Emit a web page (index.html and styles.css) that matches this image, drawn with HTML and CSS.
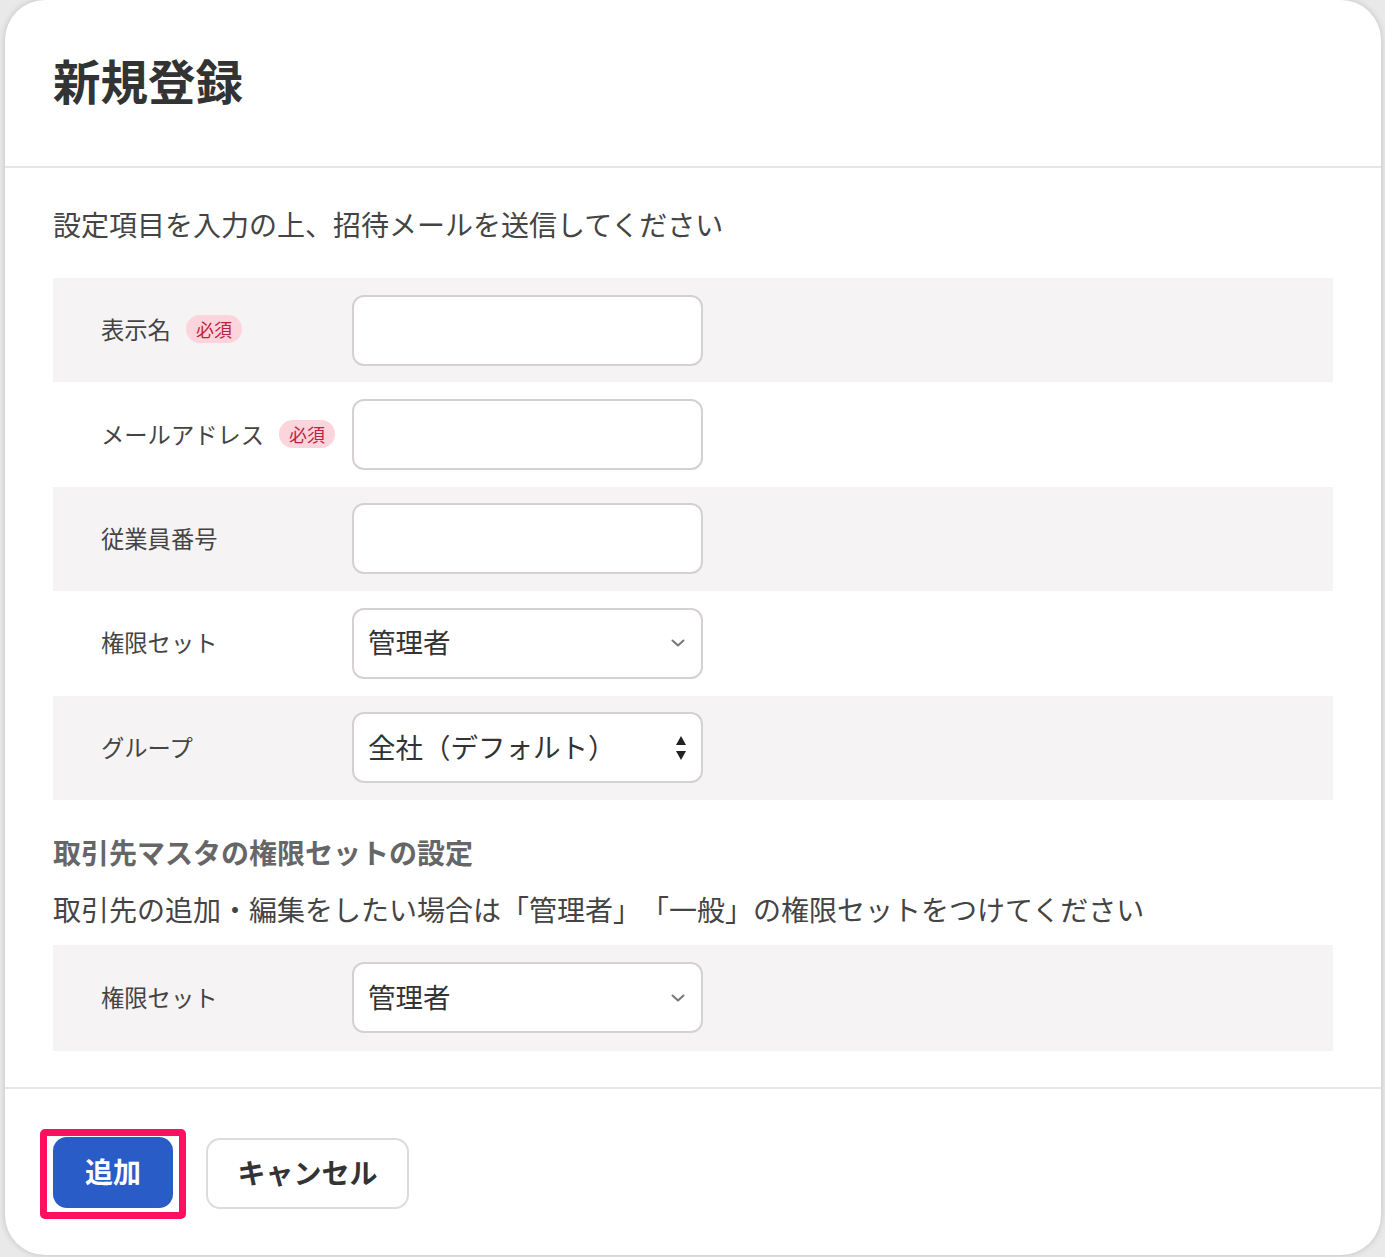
FILE: index.html
```html
<!DOCTYPE html>
<html lang="ja">
<head>
    <meta charset="UTF-8">
    <meta name="viewport" content="width=device-width, initial-scale=1.0">
    <title>新規登録</title>
    <link rel="stylesheet" href="styles.css">
</head>
<body>
    <div class="modal">
        <div class="modal-header">
            <h1>新規登録</h1>
        </div>

        <div class="modal-body">
            <p class="lead">設定項目を入力の上、招待メールを送信してください</p>

            <div class="form-table">
                <div class="form-row">
                    <div class="form-label">表示名<span class="required">必須</span></div>
                    <input type="text" class="text-input">
                </div>
                <div class="form-row">
                    <div class="form-label">メールアドレス<span class="required">必須</span></div>
                    <input type="text" class="text-input">
                </div>
                <div class="form-row">
                    <div class="form-label">従業員番号</div>
                    <input type="text" class="text-input">
                </div>
                <div class="form-row">
                    <div class="form-label">権限セット</div>
                    <div class="select-box">
                        <span>管理者</span>
                        <svg class="chevron" width="14" height="10" viewBox="0 0 14 10"><path d="M1.5 2.5 L7 7.5 L12.5 2.5" fill="none" stroke="#777" stroke-width="2" stroke-linecap="round" stroke-linejoin="round"/></svg>
                    </div>
                </div>
                <div class="form-row">
                    <div class="form-label">グループ</div>
                    <div class="select-box">
                        <span>全社（デフォルト）</span>
                        <svg class="stepper" width="12" height="26" viewBox="0 0 12 26"><path d="M6 1 L11 10 L1 10 Z M6 25 L11 16 L1 16 Z" fill="#222"/></svg>
                    </div>
                </div>
            </div>

            <h2 class="section-title">取引先マスタの権限セットの設定</h2>
            <p class="section-note">取引先の追加・編集をしたい場合は「管理者」「一般」の権限セットをつけてください</p>

            <div class="form-table partner-table">
                <div class="form-row">
                    <div class="form-label">権限セット</div>
                    <div class="select-box">
                        <span>管理者</span>
                        <svg class="chevron" width="14" height="10" viewBox="0 0 14 10"><path d="M1.5 2.5 L7 7.5 L12.5 2.5" fill="none" stroke="#777" stroke-width="2" stroke-linecap="round" stroke-linejoin="round"/></svg>
                    </div>
                </div>
            </div>
        </div>

        <div class="modal-footer">
            <div class="highlight">
                <button class="btn btn-primary">追加</button>
            </div>
            <button class="btn btn-secondary">キャンセル</button>
        </div>
    </div>
</body>
</html>
```

FILE: styles.css
```css
* {
    margin: 0;
    padding: 0;
    box-sizing: border-box;
    font-family: "Noto Sans CJK JP", "Noto Sans", sans-serif;
    text-spacing-trim: space-all;
}

body {
    background: #e9e9e9;
    padding: 0 4px 2px 5px;
    min-height: 100vh;
}

.modal {
    background: #fff;
    border-radius: 40px;
    box-shadow: 0 0 6px rgba(0, 0, 0, 0.18);
    width: 1376px;
    height: 1255px;
    overflow: hidden;
}

.modal-header {
    padding: 45px 48px 52px;
}

.modal-header h1 {
    font-size: 47.5px;
    line-height: 69px;
    font-weight: 700;
    color: #333;
}

.modal-body {
    border-top: 2px solid #e6e6e6;
    border-bottom: 2px solid #e6e6e6;
    padding: 35px 48px 36px;
}

.lead,
.section-note {
    font-size: 28px;
    line-height: 42px;
    color: #444;
}

.form-table {
    margin-top: 33px;
}

.form-row {
    display: flex;
    align-items: center;
    height: 104.4px;
    padding-left: 48px;
}

.form-row:nth-child(odd) {
    background: #f5f3f4;
}

.partner-table .form-row {
    height: 106px;
}

.form-label {
    width: 251px;
    font-size: 23.3px;
    color: #444;
    display: flex;
    align-items: center;
    gap: 15px;
    padding-bottom: 2px;
}

.required {
    font-size: 18px;
    line-height: 28px;
    padding: 0 10px;
    border-radius: 14px;
    background: #fcd5dc;
    color: #c01f3d;
}

.text-input,
.select-box {
    width: 351px;
    height: 71px;
    border: 2px solid #d5d1d2;
    border-radius: 12px;
    background: #fff;
    outline: none;
}

.select-box {
    display: flex;
    align-items: center;
    justify-content: space-between;
    padding: 0 14px 4px 14px;
    font-size: 27.5px;
    color: #333;
}

.select-box .chevron {
    margin-right: 2px;
    margin-top: 4px;
}

.select-box .stepper {
    margin-top: 4px;
}

.section-title {
    margin-top: 31px;
    font-size: 28px;
    line-height: 42px;
    font-weight: 700;
    color: #666;
}

.section-note {
    margin-top: 15px;
}

.section-note + .form-table {
    margin-top: 15px;
}

.modal-footer {
    display: flex;
    align-items: center;
    gap: 20px;
    padding: 40px 35px;
}

.highlight {
    border: 7px solid #fe1060;
    border-radius: 5px;
    padding: 1px 6px 4px 6px;
}

.btn {
    height: 71px;
    border-radius: 14px;
    font-size: 28px;
    font-weight: 700;
    cursor: pointer;
    padding-bottom: 3px;
}

.btn-primary {
    width: 120px;
    background: #2a5cc8;
    color: #fff;
    border: none;
    display: block;
}

.btn-secondary {
    width: 203px;
    background: #fff;
    color: #333;
    border: 2px solid #dcdcdc;
}
```
